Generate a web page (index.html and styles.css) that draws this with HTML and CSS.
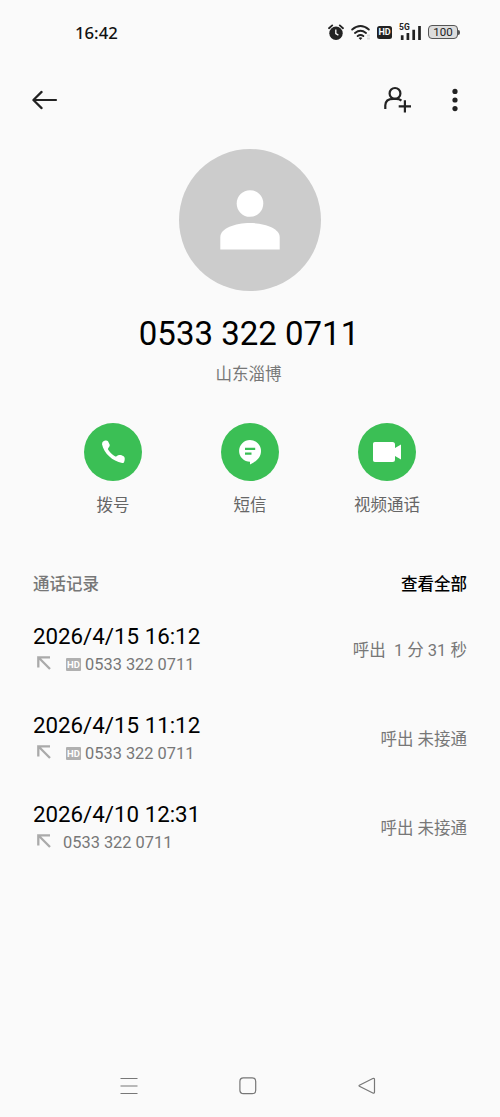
FILE: index.html
```html
<!DOCTYPE html>
<html lang="zh-CN">
<head>
<meta charset="utf-8">
<title>通话记录</title>
<link rel="stylesheet" href="styles.css">
</head>
<body>
<div class="screen">
  <div class="status">
    <span class="clock">16:42</span>
    <div class="status-icons">
      <svg class="alarm" width="16" height="17" viewBox="0 0 16 17"><circle cx="8" cy="9.2" r="6.7" fill="#222"/><path d="M1 4.2 4.2 1.4M15 4.2 11.8 1.4" stroke="#222" stroke-width="1.8" stroke-linecap="round"/><path d="M7.8 5.6v4l2.6 1.5" fill="none" stroke="#fafafa" stroke-width="1.3"/></svg>
      <svg class="wifi" width="20" height="17" viewBox="0 0 20 17"><g fill="none" stroke="#222" stroke-width="1.9" stroke-linecap="round"><path d="M1.2 5.6Q9.5-1.4 17.8 5.6M4 9Q9.5 4.6 15 9M6.7 12.1Q9.5 10 12.3 12.1"/></g><path d="M7.6 14q1.9-1.5 3.8 0l-1.9 2Z" fill="#222"/><path d="M16 11.5h3M16 14.5h3" stroke="#ddd" stroke-width="2"/></svg>
      <span class="hd">HD</span>
      <svg class="signal" width="22" height="18" viewBox="0 0 22 18"><text x="-1" y="7" class="net">5G</text><path d="M2.2 12.2V17M7.900 10V17M13.700 6.8V17M19.500 3V17" stroke="#222" stroke-width="2.700"/></svg>
      <span class="battery"><span class="level">100</span><i class="tip"></i></span>
    </div>
  </div>

  <header class="toolbar">
    <svg width="26" height="20" viewBox="0 0 26 20"><path d="M24 10H1.5M9.600 1.900 1.400 10l8.200 8.100" fill="none" stroke="#222" stroke-width="2.200" stroke-linecap="round" stroke-linejoin="round"/></svg>
    <div class="tools">
      <svg width="30" height="28" viewBox="0 0 30 28"><g fill="none" stroke="#222" stroke-width="2.200"><circle cx="12" cy="7.400" r="5.400"/><path d="M2.300 23V19.200Q2.600 12.800 10.300 12.800H13Q16.600 12.800 18.400 14.600M21.900 14.200V26.400M15.700 20.300H28"/></g></svg>
      <svg width="8" height="24" viewBox="0 0 8 24" fill="#222"><circle cx="4" cy="3.400" r="2.600"/><circle cx="4" cy="12" r="2.600"/><circle cx="4" cy="20.600" r="2.600"/></svg>
    </div>
  </header>

  <section class="profile">
    <svg class="avatar" width="142" height="142" viewBox="0 0 142 142"><circle cx="71" cy="71" r="71" fill="#ccc"/><circle cx="71" cy="54.500" r="13.300" fill="#fff"/><path d="M41.300 100.500V88C41.300 79.500 56 74 71 74s29.700 5.500 29.700 14v12.500Z" fill="#fff"/></svg>
    <h1 class="number">0533 322 0711</h1>
    <p class="place">山东淄博</p>
  </section>

  <nav class="actions">
    <div class="action">
      <span class="disc"><svg width="24" height="24" viewBox="0 0 24 24"><path d="M1.400 2.300C2.500.6 5.800-.1 7 1.200L8.500 4.300C9 5.600 8.600 6.600 7.200 8.300L6.900 9.200C8.500 12 11.200 14.700 14.300 16.600L15.200 16.400C17.200 14.900 18.800 14.700 20 15.100L22.600 16.300C24 17.100 24 19.100 23.200 21.700C22.900 22.700 22.400 23.200 21.200 23C11.500 21.200 2.900 13.100 1 4.200Z" fill="#fff"/></svg></span>
      <span class="label">拨号</span>
    </div>
    <div class="action">
      <span class="disc"><svg width="24" height="26" viewBox="0 0 24 26"><path d="M12 1a11 11 0 0 1 11 11c0 6.200-4.400 10.500-11 13.500V22.800A10.900 10.900 0 0 1 12 1Z" fill="#fff"/><path d="M7 9.800h10.200M7 14.600h6.500" stroke="#3bbf55" stroke-width="2.200"/></svg></span>
      <span class="label">短信</span>
    </div>
    <div class="action">
      <span class="disc"><svg width="28" height="20" viewBox="0 0 28 20"><path d="M1.800 0H19.500Q22 0 22 2.500V6L28 2.600V17.400L22 14V17.500Q22 20 19.500 20H1.800Q0 20 0 18.200V1.800Q0 0 1.800 0Z" fill="#fff"/></svg></span>
      <span class="label">视频通话</span>
    </div>
  </nav>

  <main class="log">
    <div class="log-head"><span class="log-title">通话记录</span><span class="see-all">查看全部</span></div>
    <div class="entry">
      <div class="info">
        <div class="date">2026/4/15 16:12</div>
        <div class="sub"><svg class="out" width="14" height="14" viewBox="0 0 14 14"><path d="M13 1.300H1.300V11.500M1.800 1.800 13 13" fill="none" stroke="#aaa" stroke-width="2.300"/></svg><span class="tag">HD</span><span>0533 322 0711</span></div>
      </div>
      <span class="result">呼出&nbsp; 1 分 31 秒</span>
    </div>
    <div class="entry">
      <div class="info">
        <div class="date">2026/4/15 11:12</div>
        <div class="sub"><svg class="out" width="14" height="14" viewBox="0 0 14 14"><path d="M13 1.300H1.300V11.500M1.800 1.800 13 13" fill="none" stroke="#aaa" stroke-width="2.300"/></svg><span class="tag">HD</span><span>0533 322 0711</span></div>
      </div>
      <span class="result">呼出 未接通</span>
    </div>
    <div class="entry">
      <div class="info">
        <div class="date">2026/4/10 12:31</div>
        <div class="sub"><svg class="out" width="14" height="14" viewBox="0 0 14 14"><path d="M13 1.300H1.300V11.500M1.800 1.800 13 13" fill="none" stroke="#aaa" stroke-width="2.300"/></svg><span>0533 322 0711</span></div>
      </div>
      <span class="result">呼出 未接通</span>
    </div>
  </main>

  <footer class="navbar">
    <svg width="18" height="18" viewBox="0 0 18 18"><path d="M.5 1.500h17M.5 9h17M.5 16.500h17" stroke="#777" stroke-width="1.200"/></svg>
    <svg width="18" height="18" viewBox="0 0 18 18"><rect x=".9" y=".9" width="15.800" height="15.800" rx="3.500" fill="none" stroke="#777" stroke-width="1.200"/></svg>
    <svg width="18" height="18" viewBox="0 0 18 18"><path d="M1.400 8.300 14.800 1.500Q16.500.8 16.500 2.500V15Q16.500 16.700 14.800 16L1.400 9.300Q.6 8.800 1.400 8.300Z" fill="none" stroke="#777" stroke-width="1.200"/></svg>
  </footer>
</div>
</body>
</html>
```
FILE: styles.css
```css
* { box-sizing: border-box; }
body { margin: 0; background: #fafafa; }
svg { display: block; flex: none; }
.screen {
  width: 500px;
  height: 1117px;
  display: flex;
  flex-direction: column;
  background: #fafafa;
  color: #000;
  font-family: Roboto, "Noto Sans CJK SC", sans-serif;
}
.status {
  height: 64px;
  padding: 0 40px 0 75px;
  display: flex;
  align-items: center;
  justify-content: space-between;
}
.clock { font: 500 16.700px/24px "Noto Sans", sans-serif; color: #111; padding-top: 1px; }
.status-icons { display: flex; align-items: center; }
.wifi { margin-left: 7px; }
.hd {
  width: 15px;
  height: 13px;
  margin-left: 6px;
  border-radius: 2.5px;
  background: #222;
  color: #fafafa;
  font: 700 9px/13px Roboto, sans-serif;
  text-align: center;
}
.signal { margin-left: 8px; overflow: visible; }
.net { font: 700 8.5px Roboto, sans-serif; fill: #222; }
.battery {
  display: flex;
  align-items: center;
  margin-left: 6px;
}
.level {
  width: 30px;
  height: 14px;
  border: 1.5px solid #555;
  border-radius: 4px;
  background: #ddd;
  font: 400 11.500px/12px Roboto, sans-serif;
  text-align: center;
  color: #222;
}
.tip { width: 2px; height: 5px; background: #555; border-radius: 0 2px 2px 0; }
.toolbar {
  height: 71px;
  padding: 0 41px 0 32px;
  display: flex;
  align-items: center;
  justify-content: space-between;
}
.tools { display: flex; align-items: center; gap: 38px; }
.profile {
  height: 288px;
  padding-top: 14px;
  display: flex;
  flex-direction: column;
  align-items: center;
}
.number { margin: 23px 2px 0 0; font-size: 33px; line-height: 40px; font-weight: 400; }
.place { margin: 9px 3px 0 0; font-size: 16.500px; line-height: 24px; color: #777; }
.actions { height: 140px; display: flex; justify-content: center; }
.action { width: 137px; display: flex; flex-direction: column; align-items: center; }
.disc {
  width: 58px;
  height: 58px;
  border-radius: 50%;
  background: #3bbf55;
  display: flex;
  align-items: center;
  justify-content: center;
}
.label { margin-top: 13px; font-size: 16.500px; line-height: 24px; color: #666; }
.log { flex: 1; padding: 0 33px; }
.log-head {
  height: 39px;
  margin-bottom: 1px;
  display: flex;
  align-items: center;
  justify-content: space-between;
  font-size: 16.500px;
  font-weight: 500;
}
.log-title { color: #777; }
.see-all { color: #000; }
.entry { height: 89px; display: flex; align-items: center; justify-content: space-between; }
.info { padding-top: 2px; }
.date { font-size: 22.300px; line-height: 30px; }
.sub {
  height: 26px;
  padding: 1px 0 0 4px;
  display: flex;
  align-items: center;
  font-size: 16.400px;
  color: #777;
}
.out { margin: 0 12px 2px 0; }
.tag {
  width: 15px;
  height: 13px;
  margin: 0 4px 0 3px;
  border-radius: 1px;
  background: #b0b0b0;
  color: #fff;
  font: 700 9.500px/13px Roboto, sans-serif;
  text-align: center;
}
.result { padding-top: 2px; font-size: 16.500px; color: #777; }
.navbar { height: 62px; padding: 0 124px 0 120px; display: flex; align-items: center; justify-content: space-between; }
```
